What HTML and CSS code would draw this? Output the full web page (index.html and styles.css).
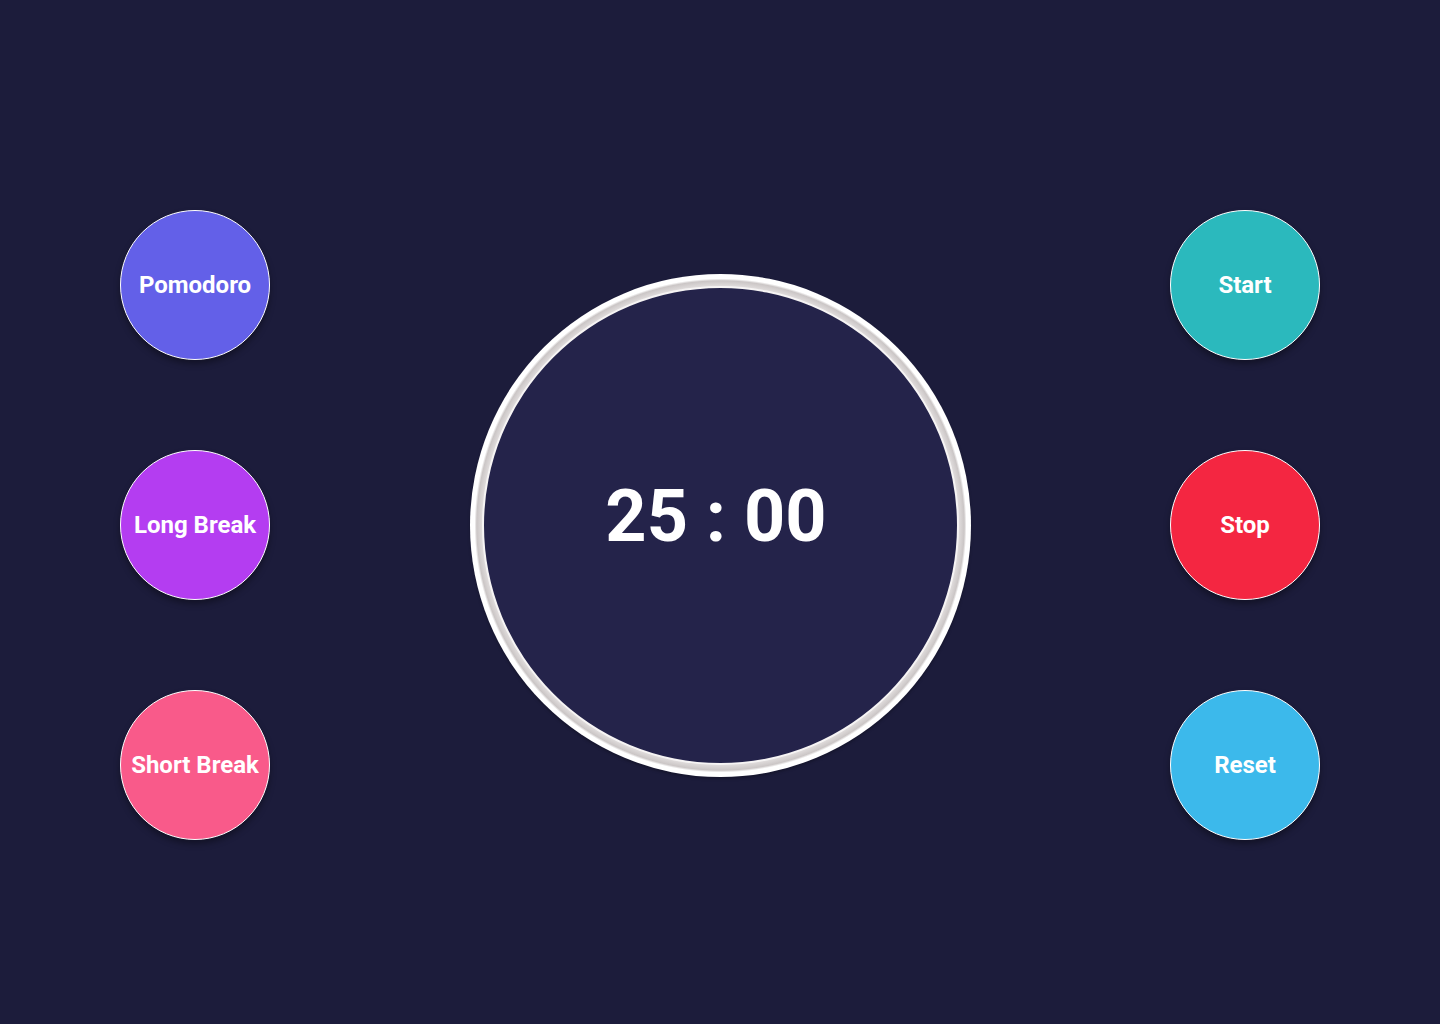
FILE: index.html
```html
<!DOCTYPE html>
<html lang="en">
<head>
<meta charset="utf-8">
<title>Pomodoro Timer</title>
<link rel="stylesheet" href="styles.css">
</head>
<body>
<main class="app">
  <div class="col">
    <button class="btn pomodoro">Pomodoro</button>
    <button class="btn long">Long Break</button>
    <button class="btn short">Short Break</button>
  </div>
  <div class="timer">
    <div class="timer-inner">
      <span class="time">25 : 00</span>
    </div>
  </div>
  <div class="col">
    <button class="btn start">Start</button>
    <button class="btn stop">Stop</button>
    <button class="btn reset">Reset</button>
  </div>
</main>
</body>
</html>
```
FILE: styles.css
```css
* { box-sizing: border-box; }
html, body { margin: 0; padding: 0; }
body {
  background: #1c1c3b;
  width: 1440px;
  height: 1024px;
  font-family: Roboto, "Liberation Sans", sans-serif;
  overflow: hidden;
}
.app {
  display: flex;
  justify-content: space-between;
  align-items: flex-start;
  padding: 210px 120px 0 120px;
  height: 1024px;
}
.col {
  display: flex;
  flex-direction: column;
  gap: 90px;
}
.btn {
  width: 150px;
  height: 150px;
  border-radius: 50%;
  border: 1px solid #ffffff;
  color: #ffffff;
  font-family: Roboto, "Liberation Sans", sans-serif;
  font-weight: 700;
  font-size: 24px;
  padding: 0;
  box-shadow: 0 4px 6px rgba(0, 0, 0, 0.35);
  display: flex;
  align-items: center;
  justify-content: center;
  white-space: nowrap;
}
.pomodoro { background: #6360e8; }
.long { background: #b43df1; }
.short { background: #f95a8a; }
.start { background: #2bb9bd; }
.stop { background: #f42641; }
.reset { background: #3cb9eb; }
.timer {
  margin-top: 64px;
  width: 501px;
  height: 503px;
  border-radius: 50%;
  padding: 12px;
  background: radial-gradient(closest-side, #ebe8e8 0, #ebe8e8 94%, #cbc6c6 97.3%, #ffffff 98.2%, #ffffff 100%);
  box-shadow: 0 2px 3px rgba(0, 0, 0, 0.25);
}
.timer .timer-inner {
  width: 100%;
  height: 100%;
  border-radius: 50%;
  background: #24234a;
  border: 2px solid #f6f4f4;
  display: flex;
  align-items: center;
  justify-content: center;
}
.time {
  color: #ffffff;
  font-weight: 700;
  font-size: 72px;
  margin-top: -18px;
  margin-left: -8px;
}
```
